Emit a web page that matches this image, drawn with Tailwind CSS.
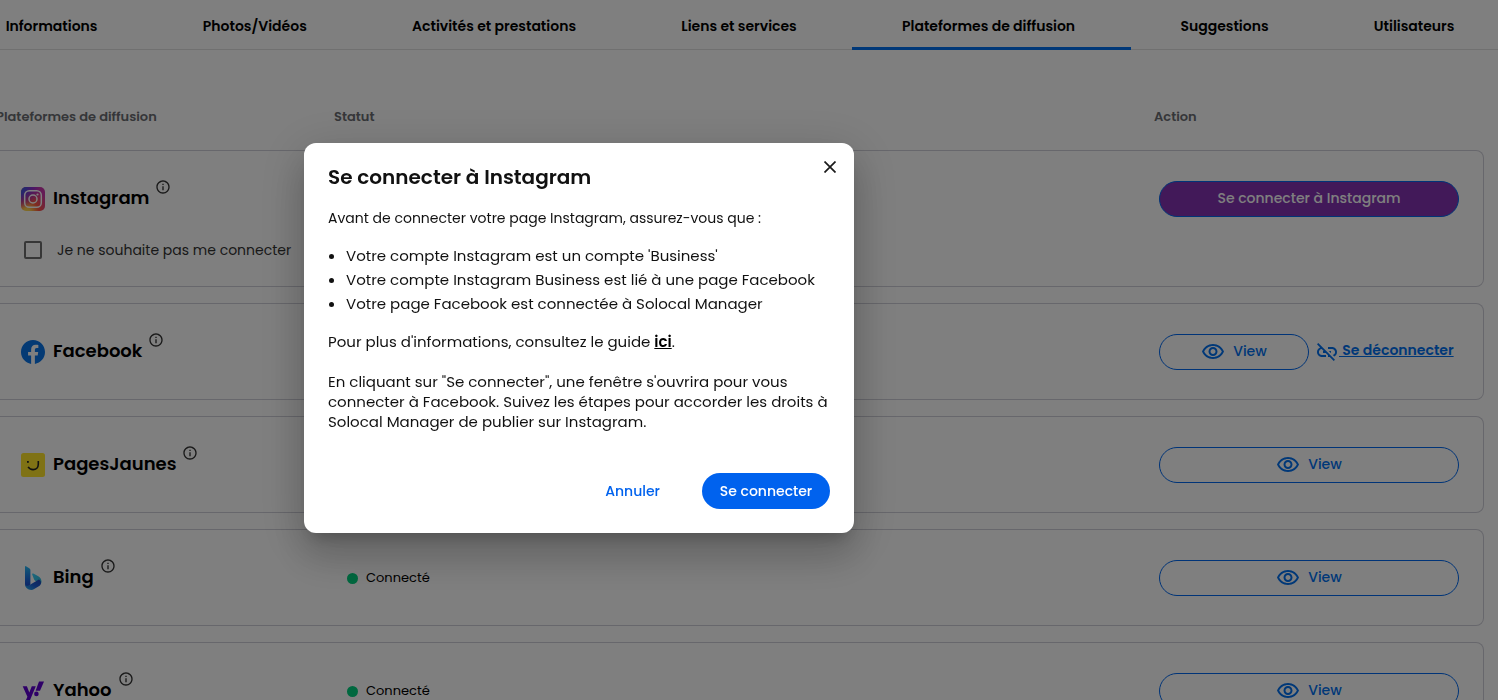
<!DOCTYPE html>
<html lang="fr">
<head>
    <meta charset="UTF-8">
    <meta name="viewport" content="width=device-width, initial-scale=1.0">
    <title>Plateformes de diffusion - Solocal Manager</title>
    <script src="https://cdn.jsdelivr.net/npm/@tailwindcss/browser@4"></script>
</head>
<body class="h-screen overflow-hidden bg-white font-['Poppins','Inter',sans-serif] text-black">
    <svg class="hidden">
        <symbol id="info" viewBox="0 0 24 24"><path d="M11 7h2v2h-2zm0 4h2v6h-2zm1-9C6.48 2 2 6.48 2 12s4.48 10 10 10 10-4.48 10-10S17.52 2 12 2m0 18c-4.41 0-8-3.59-8-8s3.59-8 8-8 8 3.59 8 8-3.59 8-8 8"/></symbol>
        <symbol id="eye" viewBox="0 0 24 24"><path d="M12 6c3.79 0 7.17 2.13 8.82 5.5C19.17 14.87 15.79 17 12 17s-7.17-2.13-8.82-5.5C4.83 8.13 8.21 6 12 6m0-2C7 4 2.73 7.11 1 11.5 2.73 15.89 7 19 12 19s9.27-3.11 11-7.5C21.27 7.11 17 4 12 4m0 5c1.38 0 2.5 1.12 2.5 2.5S13.38 14 12 14s-2.5-1.12-2.5-2.5S10.62 9 12 9m0-2c-2.48 0-4.5 2.02-4.5 4.5S9.52 16 12 16s4.500-2.02 4.500-4.500S14.480 7 12 7"/></symbol>
    </svg>

    <!-- Tabs -->
    <nav class="-ml-11 -mr-3 flex h-[50px] border-b border-[#e0e0e0] text-sm font-semibold">
        <a href="#" class="flex h-[50px] grow items-center justify-center whitespace-nowrap pt-[5px] pr-1.5 border-b-3 border-transparent">Informations</a>
        <a href="#" class="flex h-[50px] grow items-center justify-center whitespace-nowrap pt-[5px] pr-1.5 border-b-3 border-transparent">Photos/Vidéos</a>
        <a href="#" class="flex h-[50px] grow items-center justify-center whitespace-nowrap pt-[5px] pr-1.5 border-b-3 border-transparent">Activités et prestations</a>
        <a href="#" class="flex h-[50px] grow items-center justify-center whitespace-nowrap pt-[5px] pr-1.5 border-b-3 border-transparent">Liens et services</a>
        <a href="#" class="flex h-[50px] grow items-center justify-center whitespace-nowrap pt-[5px] pr-1.5 border-b-3 border-[#0070f0]" aria-current="page">Plateformes de diffusion</a>
        <a href="#" class="flex h-[50px] grow items-center justify-center whitespace-nowrap pt-[5px] pr-1.5 border-b-3 border-transparent">Suggestions</a>
        <a href="#" class="flex h-[50px] grow items-center justify-center whitespace-nowrap pt-[5px] pr-1.5 border-b-3 border-transparent">Utilisateurs</a>
    </nav>

    <!-- Platforms -->
    <main class="-ml-3 mr-3.5 pt-8">
        <table class="w-full table-fixed border-separate border-spacing-x-0 border-spacing-y-4 text-left">
            <colgroup>
                <col class="w-[346px]">
                <col>
                <col class="w-[330px]">
            </colgroup>
            <thead class="text-[13px] text-[#6b6d72]">
                <tr class="h-9">
                    <th class="pt-0.5 pl-2 font-semibold">Plateformes de diffusion</th>
                    <th class="pt-0.5 font-semibold">Statut</th>
                    <th class="pt-0.5 font-semibold">Action</th>
                </tr>
            </thead>
            <tbody class="align-top">
                <tr>
                    <td class="rounded-l-lg border-y border-[#cfcfd8] pt-[30px] pb-4 pl-[33px]">
                        <div class="flex h-9 items-center">
                            <svg class="size-6" viewBox="0 0 24 24">
                                <defs>
                                    <radialGradient id="igWarm" cx="0.25" cy="1.05" r="1"><stop offset="0" stop-color="#ffdd55"/><stop offset="0.15" stop-color="#ffcf50"/><stop offset="0.5" stop-color="#ff543e"/><stop offset="1" stop-color="#c837ab"/></radialGradient>
                                    <radialGradient id="igCool" cx="-0.1" cy="0" r="0.9"><stop offset="0" stop-color="#3771c8"/><stop offset="0.3" stop-color="#4a50d8"/><stop offset="1" stop-color="#6600ff" stop-opacity="0"/></radialGradient>
                                </defs>
                                <rect width="24" height="24" rx="5" fill="url(#igWarm)"/>
                                <rect width="24" height="24" rx="5" fill="url(#igCool)"/>
                                <rect x="3.7" y="3.7" width="16.6" height="16.6" rx="4.6" fill="none" stroke="#fff" stroke-width="1.5"/>
                                <circle cx="12" cy="12" r="4" fill="none" stroke="#fff" stroke-width="1.5"/>
                                <circle cx="16.5" cy="7.5" r="1.1" fill="#fff"/>
                            </svg>
                            <span class="ml-2 pb-0.5 text-lg font-semibold">Instagram</span>
                            <svg class="-mt-0.5 ml-1.5 size-4 self-start fill-[#333333]"><use href="#info"/></svg>
                        </div>
                        <div class="mt-[13px] flex h-10 items-center gap-[15px] pl-[3px]">
                            <input id="skip-instagram" type="checkbox" class="size-[18px] appearance-none rounded-xs border-2 border-[#6f6f6f]">
                            <label for="skip-instagram" class="whitespace-nowrap text-sm text-[#333333]">Je ne souhaite pas me connecter</label>
                        </div>
                    </td>
                    <td class="border-y border-[#cfcfd8]"></td>
                    <td class="rounded-r-lg border-y border-r border-[#cfcfd8] pt-[30px] pl-[5px] pr-6">
                        <button class="h-9 w-full rounded-full border border-[#0068f0] bg-[#8433b3] pb-0.5 text-sm font-medium text-white">Se connecter à Instagram</button>
                    </td>
                </tr>
                <tr>
                    <td class="rounded-l-lg border-y border-[#cfcfd8] pt-[30px] pb-[29px] pl-[33px]">
                        <div class="flex h-9 items-center">
                            <svg class="size-6" viewBox="0 0 24 24"><path fill="#0874e8" d="M24 12.073c0-6.627-5.373-12-12-12s-12 5.373-12 12c0 5.99 4.388 10.954 10.125 11.854v-8.385H7.078v-3.47h3.047V9.43c0-3.007 1.792-4.669 4.533-4.669 1.312 0 2.686.235 2.686.235v2.953H15.83c-1.491 0-1.956.925-1.956 1.874v2.25h3.328l-.532 3.47h-2.796v8.385C19.612 23.027 24 18.062 24 12.073z"/></svg>
                            <span class="ml-2 pb-0.5 text-lg font-semibold">Facebook</span>
                            <svg class="-mt-0.5 ml-1.5 size-4 self-start fill-[#333333]"><use href="#info"/></svg>
                        </div>
                    </td>
                    <td class="border-y border-[#cfcfd8]"></td>
                    <td class="rounded-r-lg border-y border-r border-[#cfcfd8] pt-[30px] pb-[29px] pl-[5px] pr-6">
                        <div class="flex items-center gap-1.5 text-[#0070f0]">
                            <button class="flex h-9 w-[150px] shrink-0 items-center justify-center gap-2 rounded-full border border-[#0068f0] text-sm font-medium"><svg class="size-6 fill-current"><use href="#eye"/></svg><span class="pb-0.5">View</span></button>
                            <a href="#" class="flex items-center whitespace-nowrap text-sm font-semibold">
                                <svg class="size-6 shrink-0 fill-current" viewBox="0 0 24 24"><path d="M17 7h-4v1.9h4c1.71 0 3.1 1.39 3.1 3.1 0 1.43-.98 2.63-2.31 2.98l1.46 1.46C20.88 15.61 22 13.95 22 12c0-2.76-2.24-5-5-5m-1 4h-2.19l2 2H16zM2 4.27l3.11 3.11C3.29 8.12 2 9.91 2 12c0 2.76 2.24 5 5 5h4v-1.9H7c-1.71 0-3.1-1.39-3.1-3.1 0-1.59 1.21-2.9 2.76-3.07L8.73 11H8v2h2.73L13 15.27V17h1.73l4.01 4L20 19.74 3.27 3z"/></svg>
                                <span class="pb-1 underline">&nbsp;Se déconnecter</span>
                            </a>
                        </div>
                    </td>
                </tr>
                <tr>
                    <td class="rounded-l-lg border-y border-[#cfcfd8] pt-[30px] pb-[29px] pl-[33px]">
                        <div class="flex h-9 items-center">
                            <svg class="size-6" viewBox="0 0 24 24">
                                <rect width="24" height="24" rx="2.5" fill="#ffe52b"/>
                                <path d="M17.3 8v3.3c0 3-2.2 5.3-5.2 5.3-2.2 0-4-1-5-2.7" fill="none" stroke="#222" stroke-width="1.6"/>
                                <rect x="6" y="8" width="1.8" height="1.8" fill="#222"/>
                            </svg>
                            <span class="ml-2 pb-0.5 text-lg font-semibold">PagesJaunes</span>
                            <svg class="-mt-0.5 ml-1.5 size-4 self-start fill-[#333333]"><use href="#info"/></svg>
                        </div>
                    </td>
                    <td class="border-y border-[#cfcfd8]"></td>
                    <td class="rounded-r-lg border-y border-r border-[#cfcfd8] pt-[30px] pb-[29px] pl-[5px] pr-6">
                        <button class="flex h-9 w-full items-center justify-center gap-2 rounded-full border border-[#0068f0] text-sm font-medium text-[#0070f0]"><svg class="size-6 fill-current"><use href="#eye"/></svg><span class="pb-0.5">View</span></button>
                    </td>
                </tr>
                <tr>
                    <td class="rounded-l-lg border-y border-[#cfcfd8] pt-[30px] pb-[29px] pl-[33px]">
                        <div class="flex h-9 items-center">
                            <svg class="size-6" viewBox="0 0 24 24">
                                <defs>
                                    <linearGradient id="bingBar" x1="0" y1="0" x2="0" y2="1"><stop offset="0" stop-color="#26b8f4"/><stop offset="0.6" stop-color="#1b6fe0"/><stop offset="1" stop-color="#1b48cc"/></linearGradient>
                                    <linearGradient id="bingTip" x1="0" y1="0" x2="1" y2="1"><stop offset="0" stop-color="#39d2ff"/><stop offset="1" stop-color="#2fb5d2"/></linearGradient>
                                    <linearGradient id="bingBase" x1="0" y1="1" x2="1" y2="0"><stop offset="0" stop-color="#2cb4ef"/><stop offset="0.5" stop-color="#1d5fd6"/><stop offset="1" stop-color="#1c44b8"/></linearGradient>
                                </defs>
                                <path fill="url(#bingBar)" d="M4 .7c0-.6.5-.8 1-.5l3.600 2.200c.5.400.8.900.8 1.600v14.500L6.500 21C5 20.800 4 19.800 4 18z"/>
                                <path fill="url(#bingTip)" d="M11.200 8.600c-.300-.8.300-1.400 1.100-1l5 2.600c2 1.100 3.200 3 3.200 5.300 0 1.100-.3 2-.8 2.800l-4.900-3.300c-1-.4-1.500-1-1.800-1.800z"/>
                                <path fill="url(#bingBase)" d="M4 18c.2 1.500 2 2.400 3.700 1.500l10.200-6c1.600.6 2.600 2.500 1.800 4.700-.4.900-1 1.500-1.900 2l-4.600 2.900C9.500 25.400 4 22.800 4 18"/>
                            </svg>
                            <span class="ml-2 pb-0.5 text-lg font-semibold">Bing</span>
                            <svg class="-mt-0.5 ml-1.5 size-4 self-start fill-[#333333]"><use href="#info"/></svg>
                        </div>
                    </td>
                    <td class="border-y border-[#cfcfd8] pt-[30px] pb-[29px] pl-[13px]">
                        <div class="flex h-9 items-center gap-2 text-[13px]"><span class="size-[11px] rounded-full bg-[#00d07e]"></span>Connecté</div>
                    </td>
                    <td class="rounded-r-lg border-y border-r border-[#cfcfd8] pt-[30px] pb-[29px] pl-[5px] pr-6">
                        <button class="flex h-9 w-full items-center justify-center gap-2 rounded-full border border-[#0068f0] text-sm font-medium text-[#0070f0]"><svg class="size-6 fill-current"><use href="#eye"/></svg><span class="pb-0.5">View</span></button>
                    </td>
                </tr>
                <tr>
                    <td class="rounded-l-lg border-y border-[#cfcfd8] pt-[30px] pb-[29px] pl-[33px]">
                        <div class="flex h-9 items-center">
                            <svg class="size-6" viewBox="0 0 24 24" fill="#5f01d1">
                                <path d="M1.700 7.300h4.200L8.300 13.500l2.500-6.200h4L8.800 21.700H4.700l1.700-3.900z"/>
                                <path d="M18 2.500h5l-4 9.200h-4.400z"/>
                                <circle cx="15.400" cy="14.900" r="2.300"/>
                            </svg>
                            <span class="ml-2 pb-0.5 text-lg font-semibold">Yahoo</span>
                            <svg class="-mt-0.5 ml-1.5 size-4 self-start fill-[#333333]"><use href="#info"/></svg>
                        </div>
                    </td>
                    <td class="border-y border-[#cfcfd8] pt-[30px] pb-[29px] pl-[13px]">
                        <div class="flex h-9 items-center gap-2 text-[13px]"><span class="size-[11px] rounded-full bg-[#00d07e]"></span>Connecté</div>
                    </td>
                    <td class="rounded-r-lg border-y border-r border-[#cfcfd8] pt-[30px] pb-[29px] pl-[5px] pr-6">
                        <button class="flex h-9 w-full items-center justify-center gap-2 rounded-full border border-[#0068f0] text-sm font-medium text-[#0070f0]"><svg class="size-6 fill-current"><use href="#eye"/></svg><span class="pb-0.5">View</span></button>
                    </td>
                </tr>
            </tbody>
        </table>
    </main>

    <!-- Instagram modal -->
    <div class="fixed inset-0 bg-black/50 pt-[143px] pl-[304px]">
        <div role="dialog" aria-modal="true" aria-labelledby="modal-title" class="relative w-full max-w-[550px] rounded-xl bg-white px-6 pt-5 pb-6 text-[15px] leading-5 text-[#111111] shadow-[0_11px_15px_-7px_rgba(0,0,0,0.2),0_24px_38px_3px_rgba(0,0,0,0.14),0_9px_46px_8px_rgba(0,0,0,0.12)]">
            <button aria-label="Fermer" class="absolute top-3 right-3 flex size-6 items-center justify-center">
                <svg class="size-3 stroke-[#1a1a1a]" viewBox="0 0 12 12" fill="none" stroke-width="1.7"><path d="M.5.5l11 11M11.500.5l-11 11"/></svg>
            </button>
            <h2 id="modal-title" class="text-xl leading-7 font-semibold">Se connecter à Instagram</h2>
            <p class="mt-[17px] text-sm leading-5">Avant de connecter votre page Instagram, assurez-vous que :</p>
            <ul class="mt-4 list-disc pl-[18px] leading-6">
                <li>Votre compte Instagram est un compte 'Business'</li>
                <li>Votre compte Instagram Business est lié à une page Facebook</li>
                <li>Votre page Facebook est connectée à Solocal Manager</li>
            </ul>
            <p class="mt-4">Pour plus d'informations, consultez le guide <a href="#" class="font-semibold text-black underline">ici</a>.</p>
            <p class="mt-5">En cliquant sur "Se connecter", une fenêtre s'ouvrira pour vous connecter à Facebook. Suivez les étapes pour accorder les droits à Solocal Manager de publier sur Instagram.</p>
            <div class="mt-[41px] flex justify-end gap-6 text-sm font-medium">
                <button class="h-9 px-[18px] text-[#0062ee]">Annuler</button>
                <button class="h-9 w-32 rounded-full bg-[#0062ee] text-white">Se connecter</button>
            </div>
        </div>
    </div>
</body>
</html>
